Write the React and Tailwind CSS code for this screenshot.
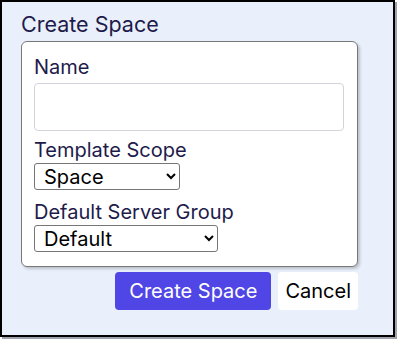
import { useState } from 'react';

export default function App() {
    const [name, setName] = useState('');
    const [scope, setScope] = useState('Space');
    const [group, setGroup] = useState('Default');

    return (
        <div className="w-[399px] h-[343px] bg-white" style={{ fontFamily: 'Inter, "Noto Sans", sans-serif' }}>
            <div className="w-[395px] h-[337px] bg-[#eaf0fb] border-2 border-black shadow-[2px_2px_0_#9ca3af] pt-[9px] pl-[19px] pr-[35px]">
                <h1 className="text-[21.5px] leading-[27px] text-[#1e1b4b]">Create Space</h1>
                <div className="mt-[3px] w-[337px] h-[226px] bg-white border border-[#777] rounded-[6px] shadow-[2px_2px_3px_rgba(0,0,0,0.2)] pt-[12px] px-[12px]">
                    <label className="block text-[20px] leading-[26px] text-[#1e1b4b]">Name</label>
                    <input
                        type="text"
                        value={name}
                        onChange={(e) => setName(e.target.value)}
                        className="mt-[3px] block w-[310px] h-[48px] border border-[#d1d5db] rounded-[4px] bg-white px-2 focus:outline-none"
                    />
                    <label className="block mt-[6px] text-[20px] leading-[26px] text-[#1e1b4b]">Template Scope</label>
                    <select
                        value={scope}
                        onChange={(e) => setScope(e.target.value)}
                        className="block mt-[0px] w-[146px] h-[27px] border border-[#767676] rounded-[3px] bg-white text-[20px] leading-[25px] text-black pl-[5px]"
                    >
                        <option>Space</option>
                        <option>Global</option>
                    </select>
                    <label className="block mt-[9px] text-[20px] leading-[26px] text-[#1e1b4b]">Default Server Group</label>
                    <select
                        value={group}
                        onChange={(e) => setGroup(e.target.value)}
                        className="block mt-[0px] w-[184px] h-[27px] border border-[#767676] rounded-[3px] bg-white text-[20px] leading-[25px] text-black pl-[5px]"
                    >
                        <option>Default</option>
                    </select>
                </div>
                <div className="mt-[5px] flex justify-end gap-[7px] w-[337px]">
                    <button className="h-[38px] px-[14px] rounded-[4px] bg-[#4f46e5] text-white text-[20px]">Create Space</button>
                    <button className="h-[38px] px-[7px] rounded-[4px] bg-white text-black text-[20px]">Cancel</button>
                </div>
            </div>
        </div>
    );
}
